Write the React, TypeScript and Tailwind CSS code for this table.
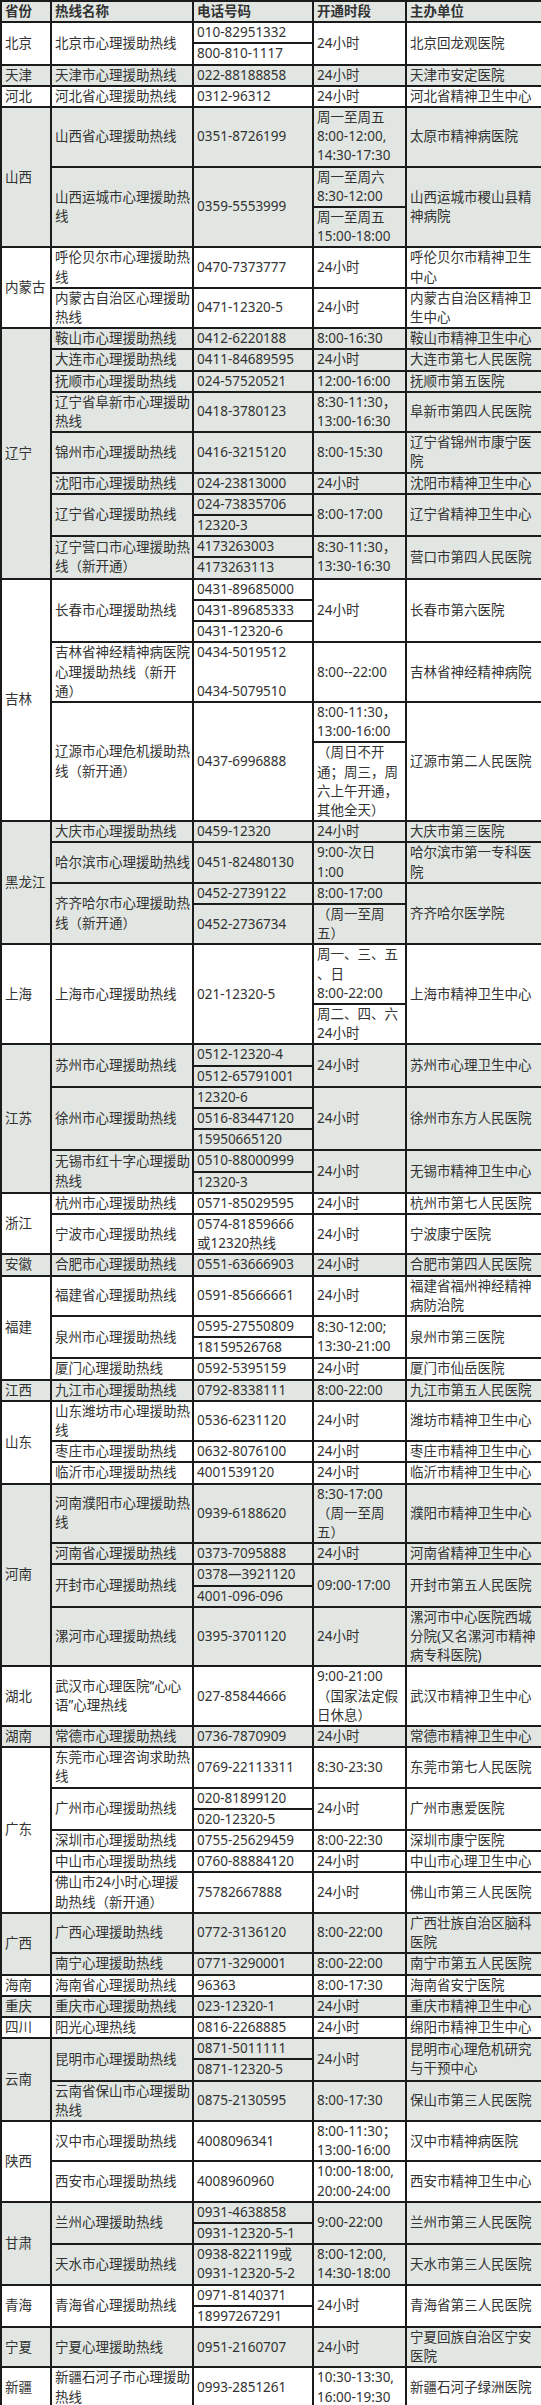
type Entry = { name: string; phones: string[]; times: string[]; org: string };
type Prov = { prov: string; entries: Entry[] };

const e = (name: string, phones: string | string[], times: string | string[], org: string): Entry => ({
  name,
  phones: Array.isArray(phones) ? phones : [phones],
  times: Array.isArray(times) ? times : [times],
  org,
});

const data: Prov[] = [
  { prov: "北京", entries: [e("北京市心理援助热线", ["010-82951332", "800-810-1117"], "24小时", "北京回龙观医院")] },
  { prov: "天津", entries: [e("天津市心理援助热线", "022-88188858", "24小时", "天津市安定医院")] },
  { prov: "河北", entries: [e("河北省心理援助热线", "0312-96312", "24小时", "河北省精神卫生中心")] },
  {
    prov: "山西",
    entries: [
      e("山西省心理援助热线", "0351-8726199", "周一至周五\n8:00-12:00,\n14:30-17:30", "太原市精神病医院"),
      e("山西运城市心理援助热\n线", "0359-5553999", ["周一至周六\n8:30-12:00", "周一至周五\n15:00-18:00"], "山西运城市稷山县精\n神病院"),
    ],
  },
  {
    prov: "内蒙古",
    entries: [
      e("呼伦贝尔市心理援助热\n线", "0470-7373777", "24小时", "呼伦贝尔市精神卫生\n中心"),
      e("内蒙古自治区心理援助\n热线", "0471-12320-5", "24小时", "内蒙古自治区精神卫\n生中心"),
    ],
  },
  {
    prov: "辽宁",
    entries: [
      e("鞍山市心理援助热线", "0412-6220188", "8:00-16:30", "鞍山市精神卫生中心"),
      e("大连市心理援助热线", "0411-84689595", "24小时", "大连市第七人民医院"),
      e("抚顺市心理援助热线", "024-57520521", "12:00-16:00", "抚顺市第五医院"),
      e("辽宁省阜新市心理援助\n热线", "0418-3780123", "8:30-11:30，\n13:00-16:30", "阜新市第四人民医院"),
      e("锦州市心理援助热线", "0416-3215120", "8:00-15:30", "辽宁省锦州市康宁医\n院"),
      e("沈阳市心理援助热线", "024-23813000", "24小时", "沈阳市精神卫生中心"),
      e("辽宁省心理援助热线", ["024-73835706", "12320-3"], "8:00-17:00", "辽宁省精神卫生中心"),
      e("辽宁营口市心理援助热\n线（新开通）", ["4173263003", "4173263113"], "8:30-11:30，\n13:30-16:30", "营口市第四人民医院"),
    ],
  },
  {
    prov: "吉林",
    entries: [
      e("长春市心理援助热线", ["0431-89685000", "0431-89685333", "0431-12320-6"], "24小时", "长春市第六医院"),
      e("吉林省神经精神病医院\n心理援助热线（新开\n通）", "0434-5019512\n\n0434-5079510", "8:00--22:00", "吉林省神经精神病院"),
      e(
        "辽源市心理危机援助热\n线（新开通）",
        "0437-6996888",
        ["8:00-11:30，\n13:00-16:00", "（周日不开\n通；周三，周\n六上午开通，\n其他全天）"],
        "辽源市第二人民医院"
      ),
    ],
  },
  {
    prov: "黑龙江",
    entries: [
      e("大庆市心理援助热线", "0459-12320", "24小时", "大庆市第三医院"),
      e("哈尔滨市心理援助热线", "0451-82480130", "9:00-次日\n1:00", "哈尔滨市第一专科医\n院"),
      e("齐齐哈尔市心理援助热\n线（新开通）", ["0452-2739122", "0452-2736734"], ["8:00-17:00", "（周一至周\n五）"], "齐齐哈尔医学院"),
    ],
  },
  {
    prov: "上海",
    entries: [e("上海市心理援助热线", "021-12320-5", ["周一、三、五\n、日\n8:00-22:00", "周二、四、六\n24小时"], "上海市精神卫生中心")],
  },
  {
    prov: "江苏",
    entries: [
      e("苏州市心理援助热线", ["0512-12320-4", "0512-65791001"], "24小时", "苏州市心理卫生中心"),
      e("徐州市心理援助热线", ["12320-6", "0516-83447120", "15950665120"], "24小时", "徐州市东方人民医院"),
      e("无锡市红十字心理援助\n热线", ["0510-88000999", "12320-3"], "24小时", "无锡市精神卫生中心"),
    ],
  },
  {
    prov: "浙江",
    entries: [
      e("杭州市心理援助热线", "0571-85029595", "24小时", "杭州市第七人民医院"),
      e("宁波市心理援助热线", "0574-81859666\n或12320热线", "24小时", "宁波康宁医院"),
    ],
  },
  { prov: "安徽", entries: [e("合肥市心理援助热线", "0551-63666903", "24小时", "合肥市第四人民医院")] },
  {
    prov: "福建",
    entries: [
      e("福建省心理援助热线", "0591-85666661", "24小时", "福建省福州神经精神\n病防治院"),
      e("泉州市心理援助热线", ["0595-27550809", "18159526768"], "8:30-12:00;\n13:30-21:00", "泉州市第三医院"),
      e("厦门心理援助热线", "0592-5395159", "24小时", "厦门市仙岳医院"),
    ],
  },
  { prov: "江西", entries: [e("九江市心理援助热线", "0792-8338111", "8:00-22:00", "九江市第五人民医院")] },
  {
    prov: "山东",
    entries: [
      e("山东潍坊市心理援助热\n线", "0536-6231120", "24小时", "潍坊市精神卫生中心"),
      e("枣庄市心理援助热线", "0632-8076100", "24小时", "枣庄市精神卫生中心"),
      e("临沂市心理援助热线", "4001539120", "24小时", "临沂市精神卫生中心"),
    ],
  },
  {
    prov: "河南",
    entries: [
      e("河南濮阳市心理援助热\n线", "0939-6188620", "8:30-17:00\n（周一至周\n五）", "濮阳市精神卫生中心"),
      e("河南省心理援助热线", "0373-7095888", "24小时", "河南省精神卫生中心"),
      e("开封市心理援助热线", ["0378—3921120", "4001-096-096"], "09:00-17:00", "开封市第五人民医院"),
      e("漯河市心理援助热线", "0395-3701120", "24小时", "漯河市中心医院西城\n分院(又名漯河市精神\n病专科医院)"),
    ],
  },
  {
    prov: "湖北",
    entries: [e("武汉市心理医院“心心\n语”心理热线", "027-85844666", "9:00-21:00\n（国家法定假\n日休息）", "武汉市精神卫生中心")],
  },
  { prov: "湖南", entries: [e("常德市心理援助热线", "0736-7870909", "24小时", "常德市精神卫生中心")] },
  {
    prov: "广东",
    entries: [
      e("东莞市心理咨询求助热\n线", "0769-22113311", "8:30-23:30", "东莞市第七人民医院"),
      e("广州市心理援助热线", ["020-81899120", "020-12320-5"], "24小时", "广州市惠爱医院"),
      e("深圳市心理援助热线", "0755-25629459", "8:00-22:30", "深圳市康宁医院"),
      e("中山市心理援助热线", "0760-88884120", "24小时", "中山市心理卫生中心"),
      e("佛山市24小时心理援\n助热线（新开通）", "75782667888", "24小时", "佛山市第三人民医院"),
    ],
  },
  {
    prov: "广西",
    entries: [
      e("广西心理援助热线", "0772-3136120", "8:00-22:00", "广西壮族自治区脑科\n医院"),
      e("南宁心理援助热线", "0771-3290001", "8:00-22:00", "南宁市第五人民医院"),
    ],
  },
  { prov: "海南", entries: [e("海南省心理援助热线", "96363", "8:00-17:30", "海南省安宁医院")] },
  { prov: "重庆", entries: [e("重庆市心理援助热线", "023-12320-1", "24小时", "重庆市精神卫生中心")] },
  { prov: "四川", entries: [e("阳光心理热线", "0816-2268885", "24小时", "绵阳市精神卫生中心")] },
  {
    prov: "云南",
    entries: [
      e("昆明市心理援助热线", ["0871-5011111", "0871-12320-5"], "24小时", "昆明市心理危机研究\n与干预中心"),
      e("云南省保山市心理援助\n热线", "0875-2130595", "8:00-17:30", "保山市第三人民医院"),
    ],
  },
  {
    prov: "陕西",
    entries: [
      e("汉中市心理援助热线", "4008096341", "8:00-11:30；\n13:00-16:00", "汉中市精神病医院"),
      e("西安市心理援助热线", "4008960960", "10:00-18:00,\n20:00-24:00", "西安市精神卫生中心"),
    ],
  },
  {
    prov: "甘肃",
    entries: [
      e("兰州心理援助热线", ["0931-4638858", "0931-12320-5-1"], "9:00-22:00", "兰州市第三人民医院"),
      e("天水市心理援助热线", "0938-822119或\n0931-12320-5-2", "8:00-12:00,\n14:30-18:00", "天水市第三人民医院"),
    ],
  },
  { prov: "青海", entries: [e("青海省心理援助热线", ["0971-8140371", "18997267291"], "24小时", "青海省第三人民医院")] },
  { prov: "宁夏", entries: [e("宁夏心理援助热线", "0951-2160707", "24小时", "宁夏回族自治区宁安\n医院")] },
  { prov: "新疆", entries: [e("新疆石河子市心理援助\n热线", "0993-2851261", "10:30-13:30,\n16:00-19:30", "新疆石河子绿洲医院")] },
];

const cell = "border-2 border-[#1b1b1b] px-[3px] py-0 align-middle whitespace-pre";

function rowsOf(en: Entry) {
  return Math.max(en.phones.length, en.times.length);
}

export default function App() {
  const body: React.ReactNode[] = [];
  data.forEach((p, pi) => {
    const bg = pi % 2 === 1 ? "bg-[#e1e6e2]" : "bg-white";
    const total = p.entries.reduce((s, en) => s + rowsOf(en), 0);
    p.entries.forEach((en, ei) => {
      const n = rowsOf(en);
      for (let i = 0; i < n; i++) {
        body.push(
          <tr key={`${pi}-${ei}-${i}`} className={bg}>
            {ei === 0 && i === 0 && (
              <td rowSpan={total} className={cell}>
                {p.prov}
              </td>
            )}
            {i === 0 && (
              <td rowSpan={n} className={cell}>
                {en.name}
              </td>
            )}
            {en.phones.length === n ? (
              <td className={cell}>{en.phones[i]}</td>
            ) : (
              i === 0 && (
                <td rowSpan={n} className={cell}>
                  {en.phones[0]}
                </td>
              )
            )}
            {en.times.length === n ? (
              <td className={cell}>{en.times[i]}</td>
            ) : (
              i === 0 && (
                <td rowSpan={n} className={cell}>
                  {en.times[0]}
                </td>
              )
            )}
            {i === 0 && (
              <td rowSpan={n} className={cell}>
                {en.org}
              </td>
            )}
          </tr>
        );
      }
    });
  });

  return (
    <div className="w-[541px] bg-white font-['Noto_Sans','Noto_Sans_CJK_SC',sans-serif] text-[13.5px] leading-[19.2px] text-[#333]">
      <table className="w-[541px] table-fixed border-collapse">
        <colgroup>
          <col className="w-[50px]" />
          <col className="w-[142px]" />
          <col className="w-[120px]" />
          <col className="w-[93px]" />
          <col className="w-[136px]" />
        </colgroup>
        <thead>
          <tr className="bg-[#e1e6e2] font-bold">
            <td className={cell}>省份</td>
            <td className={cell}>热线名称</td>
            <td className={cell}>电话号码</td>
            <td className={cell}>开通时段</td>
            <td className={cell}>主办单位</td>
          </tr>
        </thead>
        <tbody>{body}</tbody>
      </table>
    </div>
  );
}
